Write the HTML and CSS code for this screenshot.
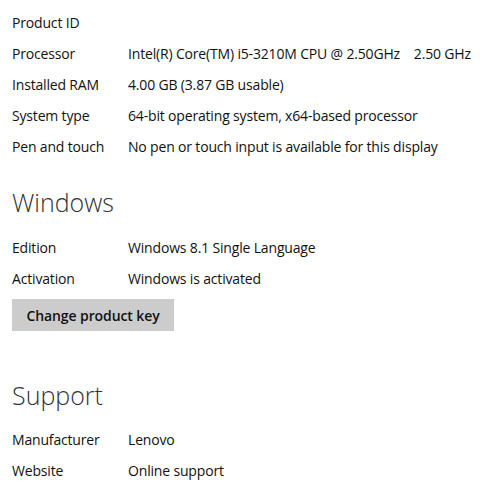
FILE: index.html
```html
<!DOCTYPE html>
<html>
<head>
<meta charset="utf-8">
<link rel="stylesheet" href="styles.css">
</head>
<body>
<div class="page">
  <div class="rows">
    <div class="row"><span class="label">Product ID</span><span class="value"></span></div>
    <div class="row"><span class="label">Processor</span><span class="value">Intel(R) Core(TM) i5-3210M CPU @ 2.50GHz&nbsp;&nbsp;&nbsp;&nbsp;2.50 GHz</span></div>
    <div class="row"><span class="label">Installed RAM</span><span class="value">4.00 GB (3.87 GB usable)</span></div>
    <div class="row"><span class="label">System type</span><span class="value">64-bit operating system, x64-based processor</span></div>
    <div class="row"><span class="label">Pen and touch</span><span class="value">No pen or touch input is available for this display</span></div>
  </div>
  <h2 class="heading windows">Windows</h2>
  <div class="rows">
    <div class="row"><span class="label">Edition</span><span class="value">Windows 8.1 Single Language</span></div>
    <div class="row"><span class="label">Activation</span><span class="value">Windows is activated</span></div>
  </div>
  <button class="btn">Change product key</button>
  <h2 class="heading support">Support</h2>
  <div class="rows">
    <div class="row"><span class="label">Manufacturer</span><span class="value">Lenovo</span></div>
    <div class="row"><span class="label">Website</span><span class="value">Online support</span></div>
  </div>
</div>
</body>
</html>
```

FILE: styles.css
```css
html, body {
  margin: 0;
  padding: 0;
  background: #fff;
}
body {
  font-family: "Open Sans", "Noto Sans", sans-serif;
  font-size: 14px;
  letter-spacing: -0.17px;
  color: #111;
}
.page {
  padding: 7px 12px 0 12px;
}
.rows {
  display: flex;
  flex-direction: column;
}
.row {
  display: flex;
  height: 31px;
  align-items: center;
  white-space: nowrap;
}
.label {
  width: 116px;
  flex: none;
}
.value {
  flex: none;
}
.heading {
  margin: 0;
  font-weight: 300;
  font-size: 25px;
  letter-spacing: 0;
  color: #333;
  line-height: 32px;
}
.windows {
  margin-top: 24px;
  margin-bottom: 14px;
}
.btn {
  display: block;
  margin-top: 5px;
  width: 162px;
  height: 32px;
  border: none;
  background: #ccc;
  font-family: inherit;
  font-size: 14px;
  font-weight: 600;
  letter-spacing: -0.1px;
  color: #111;
  padding: 0;
}
.support {
  margin-top: 48px;
  margin-bottom: 13px;
}
```
